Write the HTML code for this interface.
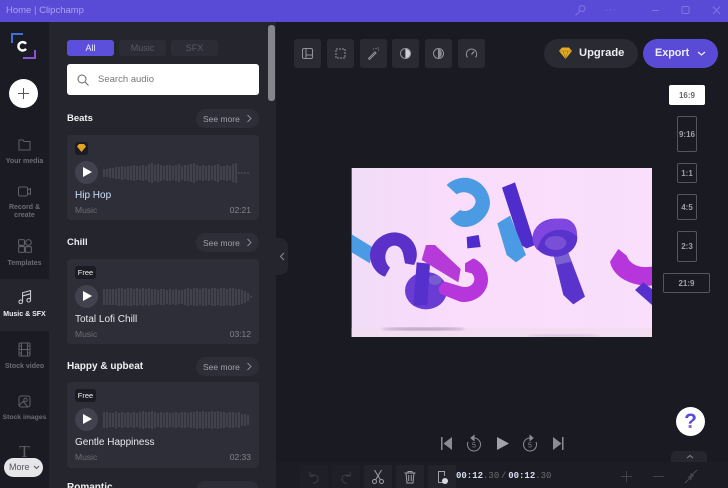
<!DOCTYPE html>
<html><head><meta charset="utf-8"><style>
*{box-sizing:border-box;margin:0;padding:0}
html,body{width:728px;height:488px;overflow:hidden;background:#1a1a23;font-family:"Liberation Sans",sans-serif}
.a{position:absolute}
#page{position:relative;width:728px;height:488px;overflow:hidden}
.nav{position:absolute;left:0;width:49px;text-align:center;font-size:7px;line-height:8px;font-weight:700;color:#6c6c74}
.nav svg{position:absolute;left:17px;width:15px;height:15px;fill:none;stroke:#5f5f68;stroke-width:1}
.pill{position:absolute;top:40px;width:47px;height:16px;border-radius:3px;background:#2c2c36;color:#5a5a64;font-size:9px;line-height:16px;text-align:center}
.h{position:absolute;left:67px;font-size:10px;font-weight:700;color:#f0f0f2}
.sm{position:absolute;left:196px;width:63px;height:19px;border-radius:10px;background:#2e2e38;color:#a0a0a8;font-size:8.5px;line-height:20px;padding-left:7px}
.sm svg{position:absolute;left:49px;top:5px;width:8px;height:9px;fill:none;stroke:#8e8e96;stroke-width:1}
.card{position:absolute;left:67px;width:192px;height:85px;border-radius:4px;background:#2e2e38}
.free{position:absolute;left:8px;top:7px;width:21px;height:13px;border-radius:3px;background:#1b1b24;color:#f0f0f0;font-size:7.5px;line-height:13px;text-align:center}
.play{position:absolute;left:8px;top:26px;width:23px;height:23px;border-radius:50%;background:#42424f}
.play:after{content:"";position:absolute;left:8px;top:6px;border-left:9px solid #fff;border-top:5.5px solid transparent;border-bottom:5.5px solid transparent}
.wave{position:absolute;left:36px;top:25px;width:150px;height:26px;fill:none;stroke:#42424d;stroke-width:2.2}
.t{position:absolute;left:8px;top:55px;font-size:10px;color:#e8e8ee}
.m{position:absolute;left:8px;top:70px;font-size:8.5px;color:#6e6e76}
.d{position:absolute;right:8px;top:70px;font-size:8.5px;color:#85858d}
.tool{position:absolute;top:39px;width:27px;height:29px;border-radius:3px;background:#2a2a33}
.tool svg{position:absolute;left:7px;top:8px;width:13px;height:13px;fill:none;stroke:#93939a;stroke-width:1}
.r{position:absolute;border:1px solid #55555d;border-radius:2px;color:#a0a0a6;font-size:8px;font-weight:700;display:flex;align-items:center;justify-content:center}
.bt{position:absolute;top:465px;width:28px;height:23px;background:#1f1f28}
.bt svg{position:absolute;left:7px;top:5px;width:14px;height:14px;fill:none;stroke-width:1}
</style></head><body><div id="page">

<div class="a" style="left:0;top:0;width:728px;height:22px;background:#5a4bd6"></div>
<div class="a" style="left:6px;top:5px;font-size:9.5px;color:#a9a2ee">Home | Clipchamp</div>
<svg class="a" style="left:570px;top:2px" width="158" height="16" fill="none" stroke="#7f74e2" stroke-width="1">
<circle cx="12" cy="6.500" r="3"/><path d="M10 9L5.500 13.500"/><path d="M36 8h1M40 8h1M44 8h1"/>
<path d="M82 8.500h7"/><rect x="112" y="4.500" width="7" height="7" rx="1.500"/><path d="M143 4.500l7 7.500M150 4.500l-7 7.500"/>
</svg>

<div class="a" style="left:0;top:22px;width:49px;height:466px;background:#1b1b24"></div>
<div class="a" style="left:49px;top:22px;width:227px;height:466px;background:#25252e"></div>
<div class="a" style="left:0;top:279px;width:49px;height:52px;background:#25252e"></div>

<svg class="a" style="left:10px;top:33px" width="27" height="27" fill="none">
<path d="M2 10V1H13" stroke="#3f6fd8" stroke-width="2"/>
<path d="M13 25H25V17" stroke="#8a52d8" stroke-width="2"/>
<path d="M16 10.800a4.200 4.200 0 1 0 0 5" stroke="#fff" stroke-width="2.400"/>
</svg>
<div class="a" style="left:9px;top:79px;width:29px;height:29px;border-radius:50%;background:#fff"></div>
<svg class="a" style="left:17px;top:87px" width="13" height="13" stroke="#55555e" stroke-width="1"><path d="M6.500 1v11M1 6.500h11"/></svg>

<div class="nav" style="top:135px;height:32px"><svg style="top:2px" viewBox="0 0 15 15"><path d="M2 13V3h4l1 1.500h6V13z"/></svg><span class="a" style="left:0;width:49px;top:23px">Your media</span></div>
<div class="nav" style="top:182px;height:40px"><svg style="top:2px" viewBox="0 0 15 15"><rect x="1.500" y="3" width="9" height="9" rx="1.500"/><path d="M10.500 6l3-1.500v6l-3-1.500"/></svg><span class="a" style="left:0;width:49px;top:22px">Record &amp;<br>create</span></div>
<div class="nav" style="top:240px;height:30px"><svg style="top:-2px;width:16px;height:16px" viewBox="0 0 15 15"><rect x="1.500" y="1.500" width="5.500" height="5.500" rx="1"/><rect x="1.500" y="8" width="5.500" height="5.500" rx="1"/><rect x="8" y="8" width="5.500" height="5.500" rx="1"/><circle cx="10.700" cy="4.200" r="2.700"/></svg><span class="a" style="left:0;width:49px;top:20px">Templates</span></div>
<div class="nav" style="top:290px;height:36px;color:#f0f0f4"><svg style="top:-1px;stroke:#c8c8cc;width:16px;height:16px" viewBox="0 0 15 15"><circle cx="3.500" cy="12" r="1.700"/><circle cx="11" cy="10.500" r="1.700"/><path d="M5.200 12V3.500L12.700 1.500v9M5.200 6.500l7.500-2"/></svg><span class="a" style="left:0;width:49px;top:21px">Music &amp; SFX</span></div>
<div class="nav" style="top:342px;height:36px"><svg style="top:0" viewBox="0 0 15 15"><rect x="2" y="1" width="11" height="13" rx="1"/><path d="M4.500 1v13M10.500 1v13M4.500 7.500h6M2 4h2.500M2 7.500h2.500M2 11h2.500M10.500 4H13M10.500 7.500H13M10.500 11H13"/></svg><span class="a" style="left:0;width:49px;top:21px">Stock video</span></div>
<div class="nav" style="top:394px;height:36px"><svg style="top:0" viewBox="0 0 15 15"><rect x="2" y="2" width="11" height="11" rx="2"/><circle cx="8.500" cy="6" r="1.700"/><path d="M2 11.500l4-4 5 5.500"/></svg><span class="a" style="left:0;width:49px;top:20px;font-size:6.800px">Stock images</span></div>
<div class="a" style="left:0;top:442px;width:49px;text-align:center;font:400 17px/20px 'Liberation Serif',serif;color:#5f5f68">T</div>
<div class="a" style="left:4px;top:458px;width:39px;height:19px;border-radius:10px;background:#e6e6ea;color:#55555c;font-size:9px;line-height:19px;padding-left:5px">More<svg class="a" style="left:29px;top:7px" width="7" height="5" fill="none" stroke="#55555c"><path d="M1 1l2.500 2.500L6 1"/></svg></div>

<div class="pill" style="left:67px;background:#5b4fdc;color:#f2f2f8">All</div>
<div class="pill" style="left:119px">Music</div>
<div class="pill" style="left:171px">SFX</div>
<div class="a" style="left:67px;top:64px;width:192px;height:31px;border-radius:3px;background:#fff"></div>
<svg class="a" style="left:77px;top:74px" width="12" height="12" fill="none" stroke="#66666c" stroke-width="1"><circle cx="5" cy="5" r="4"/><path d="M8 8l3.500 3.500"/></svg>
<div class="a" style="left:98px;top:74px;font-size:9.500px;color:#77777d">Search audio</div>
<div class="a" style="left:268px;top:25px;width:7px;height:76px;border-radius:3px;background:#85858b"></div>

<div class="h" style="top:113px;font-size:9.500px">Beats</div>
<div class="sm" style="top:109px">See more<svg viewBox="0 0 8 9"><path d="M2.500 1l3.500 3.500L2.500 8"/></svg></div>
<div class="card" style="top:135px">
<div class="free" style="width:13px;top:7px"></div>
<svg class="a" style="left:10px;top:9px" width="9" height="8"><path d="M2 0h5l2 2.500L4.500 8 0 2.500z" fill="#e3a51f"/></svg>
<div class="play"></div>
<svg class="wave" viewBox="0 0 150 26"><path d="M1 9v8M4 9v8M7 8v10M10 8v10M13 7v12M16 7v12M19 6v14M22 7v12M25 6v14M28 6v14M31 5v16M34 6v14M37 6v14M40 5v16M43 6v14M46 4v18M49 3v20M52 5v16M55 4v18M58 5v16M61 6v14M64 5v16M67 5v16M70 6v14M73 5v16M76 4v18M79 6v14M82 5v16M85 5v16M88 4v18M91 3v20M94 5v16M97 6v14M100 5v16M103 6v14M106 5v16M109 6v14M112 5v16M115 4v18M118 6v14M121 6v14M124 5v16M127 6v14M130 4v18M133 3v20M136 12v2M139 12v2M142 12v2M145 12v2"/></svg>
<div class="t" style="color:#c8e0f8">Hip Hop</div><div class="m">Music</div><div class="d">02:21</div></div>

<div class="h" style="top:237px;font-size:9.500px">Chill</div>
<div class="sm" style="top:233px">See more<svg viewBox="0 0 8 9"><path d="M2.500 1l3.500 3.500L2.500 8"/></svg></div>
<div class="card" style="top:259px"><div class="free">Free</div><div class="play"></div>
<svg class="wave" viewBox="0 0 150 26"><path d="M1 5v16M4 5v16M7 5v16M10 5v16M13 5v16M16 4v18M19 4v18M22 5v16M25 4v18M28 4v18M31 5v16M34 4v18M37 5v16M40 4v18M43 5v16M46 4v18M49 5v16M52 5v16M55 6v14M58 5v16M61 5v16M64 6v14M67 5v16M70 6v14M73 5v16M76 6v14M79 6v14M82 5v16M85 4v18M88 5v16M91 4v18M94 4v18M97 5v16M100 4v18M103 4v18M106 5v16M109 4v18M112 4v18M115 5v16M118 4v18M121 4v18M124 5v16M127 4v18M130 4v18M133 5v16M136 5v16M139 6v14M142 7v12M145 9v8M148 12v2"/></svg>
<div class="t">Total Lofi Chill</div><div class="m">Music</div><div class="d">03:12</div></div>

<div class="h" style="top:361px">Happy &amp; upbeat</div>
<div class="sm" style="top:357px">See more<svg viewBox="0 0 8 9"><path d="M2.500 1l3.500 3.500L2.500 8"/></svg></div>
<div class="card" style="top:382px;height:86px"><div class="free">Free</div><div class="play"></div>
<svg class="wave" viewBox="0 0 150 26"><path d="M1 5v16M4 5v16M7 6v14M10 6v14M13 5v16M16 6v14M19 5v16M22 6v14M25 5v16M28 6v14M31 5v16M34 6v14M37 5v16M40 4v18M43 5v16M46 5v16M49 4v18M52 5v16M55 6v14M58 5v16M61 6v14M64 5v16M67 6v14M70 6v14M73 5v16M76 6v14M79 5v16M82 5v16M85 6v14M88 5v16M91 5v16M94 4v18M97 5v16M100 4v18M103 5v16M106 5v16M109 4v18M112 5v16M115 4v18M118 5v16M121 5v16M124 6v14M127 5v16M130 5v16M133 6v14M136 5v16M139 7v12M142 7v12M145 8v10"/></svg>
<div class="t">Gentle Happiness</div><div class="m">Music</div><div class="d">02:33</div></div>

<div class="h" style="top:482px">Romantic</div>
<div class="sm" style="top:481px"></div>

<div class="a" style="left:276px;top:238px;width:12px;height:37px;background:#25252e;border-radius:0 8px 8px 0"></div>
<svg class="a" style="left:279px;top:252px" width="6" height="9" fill="none" stroke="#8a8a92"><path d="M5 1L1.500 4.500L5 8"/></svg>

<div class="tool" style="left:294px"><svg viewBox="0 0 13 13"><rect x="1.500" y="1.500" width="10" height="10" rx="1.500"/><path d="M5 1.500V8H11.500M5 8v3.500" /></svg></div>
<div class="tool" style="left:327px"><svg viewBox="0 0 13 13"><rect x="2" y="2" width="9" height="9" stroke-dasharray="2 1"/></svg></div>
<div class="tool" style="left:360px"><svg viewBox="0 0 13 13"><path d="M1.500 11.500L8 5l1 1-6.500 6.500z"/><path d="M9 1v1M11 3h1M11 .5v1M6 2h1" /></svg></div>
<div class="tool" style="left:392px"><svg viewBox="0 0 13 13"><circle cx="6.500" cy="6.500" r="5" /><path d="M6.500 1.500a5 5 0 0 1 0 10z" fill="#d0d0d4"/></svg></div>
<div class="tool" style="left:425px"><svg viewBox="0 0 13 13"><circle cx="6.500" cy="6.500" r="5"/><path d="M6.500 1.500v10"/><path d="M7 2a5 5 0 0 1 0 9z" fill="#8a8a90" stroke="none"/></svg></div>
<div class="tool" style="left:458px"><svg viewBox="0 0 13 13"><path d="M2.500 10.500a5.200 5.200 0 1 1 8 0"/><path d="M6.500 7.500L9 4.500" stroke-width="1.300"/></svg></div>

<div class="a" style="left:544px;top:39px;width:94px;height:29px;border-radius:15px;background:#2a2a33"></div>
<svg class="a" style="left:559px;top:47px" width="13" height="12"><path d="M3 .5h7L13 4 6.500 12 0 4z" fill="#e5ab25"/><path d="M0 4h13M4 4l2.500 7L9 4" stroke="#9a7010" stroke-width=".6" fill="none"/></svg>
<div class="a" style="left:579px;top:47px;font-size:11.200px;font-weight:700;color:#ececf0">Upgrade</div>
<div class="a" style="left:643px;top:39px;width:75px;height:29px;border-radius:15px;background:#5a4bd6"></div>
<div class="a" style="left:655px;top:47px;font-size:10.800px;font-weight:700;color:#eeeef8">Export</div>
<svg class="a" style="left:697px;top:51px" width="9" height="6" fill="none" stroke="#eeeef8" stroke-width="1.200"><path d="M1 1l3.500 3L8 1"/></svg>

<div class="r" style="left:669px;top:85px;width:36px;height:20px;background:#fff;border-color:#fff;color:#66666c">16:9</div>
<div class="r" style="left:677px;top:116px;width:20px;height:36px">9:16</div>
<div class="r" style="left:677px;top:163px;width:20px;height:20px">1:1</div>
<div class="r" style="left:677px;top:194px;width:20px;height:26px">4:5</div>
<div class="r" style="left:677px;top:231px;width:20px;height:31px">2:3</div>
<div class="r" style="left:663px;top:273px;width:47px;height:20px">21:9</div>

<svg class="a" style="left:350px;top:165px" width="305" height="175" viewBox="0 0 915 525">
<defs><linearGradient id="g" x1="0" y1="0" x2="1" y2="0"><stop offset="0" stop-color="#f1ddf8"/><stop offset=".35" stop-color="#fadcfb"/><stop offset="1" stop-color="#f9dffb"/></linearGradient>
<filter id="b"><feGaussianBlur stdDeviation="4"/></filter></defs>
<rect x="5" y="9" width="901" height="507" fill="url(#g)"/>
<rect x="5" y="490" width="901" height="26" fill="#f2dcef"/>
<ellipse cx="220" cy="492" rx="125" ry="5" fill="#b8a0c0" filter="url(#b)"/>
<ellipse cx="640" cy="512" rx="110" ry="3" fill="#d0b8d8" filter="url(#b)"/>
<path d="M5 208L65 245 60 295 5 262z" fill="#4a9be3"/>
<path d="M192 300C215 260 190 205 135 202C95 202 60 235 60 270C60 300 80 328 105 335L120 308C105 295 100 270 115 250C130 235 155 240 160 270L165 295z" fill="#5a30c8"/>
<path d="M290 60C310 40 340 35 360 40C400 50 420 85 420 115C418 150 385 185 345 186C325 186 310 175 300 160L330 135C350 145 375 130 377 110C377 90 345 72 320 88z" fill="#4a9be3"/>
<path d="M350 216L386 210 392 246 352 250z" fill="#4d2bcc"/>
<path d="M456 68L495 52 555 240 530 250 512 240z" fill="#4f2ccc"/>
<path d="M442 175L480 152 528 270 498 292 470 270z" fill="#4a9be3"/>
<path d="M607 255L650 250 705 395 670 418 640 390z" fill="#5a32cc"/>
<path d="M608 258L650 252 665 290 620 300z" fill="#7a60d0"/>
<ellipse cx="615" cy="218" rx="67" ry="57" fill="#5a32cc"/>
<path d="M548 215C552 170 610 155 650 162C675 170 684 195 680 215C660 190 610 185 580 215C570 228 565 240 562 255C552 245 548 230 548 215z" fill="#7f47df"/>
<ellipse cx="617" cy="234" rx="32" ry="21" fill="#7a4fd8"/>
<ellipse cx="228" cy="377" rx="63" ry="56" fill="#6a3cd4"/>
<ellipse cx="255" cy="345" rx="20" ry="15" fill="#7a5ad0"/>
<path d="M200 292L240 296 232 420 190 422z" fill="#5530cc"/>
<path d="M228 240L255 240 332 312 325 352 215 285z" fill="#b53ad8"/>
<path d="M345 295L370 280C405 295 420 330 412 360C400 400 360 415 330 410L275 388C262 380 262 362 285 350L335 365C365 372 385 345 365 325L345 320z" fill="#b636dc"/>
<path d="M780 290L805 252 830 272C840 300 870 310 906 305L906 362C850 365 790 340 780 290z" fill="#b636dc"/>
<path d="M855 375L880 352 906 372 906 420z" fill="#5530cc"/>
</svg>

<div class="a" style="left:676px;top:407px;width:29px;height:29px;border-radius:50%;background:#fff"></div>
<div class="a" style="left:676px;top:407px;width:29px;text-align:center;font-size:21px;font-weight:700;line-height:29px;background:linear-gradient(#5a4bd6 60%,#a060e0 70%);-webkit-background-clip:text;background-clip:text;color:transparent">?</div>

<svg class="a" style="left:440px;top:433px" width="125" height="22" fill="#8c8c92" stroke="none">
<path d="M1 4h1.500v13H1zM12 4v13L3.500 10.500z"/>
<path d="M57 4l12 6.500L57 17z" fill="#a2a2a8"/>
<path d="M113 4v13l8.500-6.500zM122 4h1.500v13H122z"/>
<g fill="none" stroke="#8c8c92"><path d="M34 5a6.500 6.500 0 1 1-6 4"/><path d="M34 2.500v5l-3-2.500z" fill="#8c8c92"/><path d="M90 5a6.500 6.500 0 1 0 6 4"/><path d="M90 2.500v5l3-2.500z" fill="#8c8c92"/></g>
<text x="32" y="14.500" font-size="7" font-family="Liberation Sans">5</text><text x="88" y="14.500" font-size="7" font-family="Liberation Sans">5</text>
</svg>

<div class="a" style="left:671px;top:451px;width:36px;height:12px;background:#26262f;border-radius:5px 5px 0 0"></div>
<svg class="a" style="left:686px;top:454px" width="8" height="5" fill="none" stroke="#8a8a90"><path d="M1 4l3-2.500L7 4"/></svg>

<div class="a" style="left:276px;top:462px;width:452px;height:26px;background:#1c1c25"></div>
<div class="bt" style="left:300px"><svg viewBox="0 0 14 14" stroke="#3e3e48"><path d="M3 2v4h4M3 6c3-2 9-1 8 3.500S6 13 6 13"/></svg></div>
<div class="bt" style="left:332px"><svg viewBox="0 0 14 14" stroke="#3e3e48"><path d="M11 2v4H7M11 6C8 4 2 5 3 9.500S8 13 8 13"/></svg></div>
<div class="bt" style="left:364px;background:#23232c"><svg viewBox="0 0 14 14" stroke="#a0a0a6"><circle cx="3.500" cy="11.500" r="2"/><circle cx="10.500" cy="11.500" r="2"/><path d="M4.500 10L10.500 0M9.500 10L3.500 0"/></svg></div>
<div class="bt" style="left:396px;background:#23232c"><svg viewBox="0 0 14 14" stroke="#a0a0a6"><path d="M1.500 3h11M5 3V1.500h4V3M3 3l1 10h6l1-10M5.700 5v6M8.300 5v6"/></svg></div>
<div class="bt" style="left:428px;background:#23232c"><svg viewBox="0 0 14 14" stroke="#a0a0a6"><path d="M9.500 6V1.500h-6v11h5"/><circle cx="10" cy="11" r="3" fill="#d8d8dc" stroke="none"/></svg></div>
<div class="a" style="left:456px;top:471px;font:700 9px/11px 'Liberation Mono',monospace;color:#d8dcf0;white-space:nowrap">00:12<span style="color:#6c6c74;font-weight:400">.30</span><span style="display:inline-block;width:9px;text-align:center;color:#6c6c74;font-weight:400">/</span>00:12<span style="color:#6c6c74;font-weight:400">.30</span></div>
<svg class="a" style="left:610px;top:464px" width="100" height="24" fill="none" stroke="#42424c"><path d="M16.500 7v11M11 12.500h11M43 12.500h11"/><path d="M75 19l6-6M78 13h3v3M87 6l-6 6M84 12h-3V9" stroke="#4e4e58"/></svg>

</div></body></html>
